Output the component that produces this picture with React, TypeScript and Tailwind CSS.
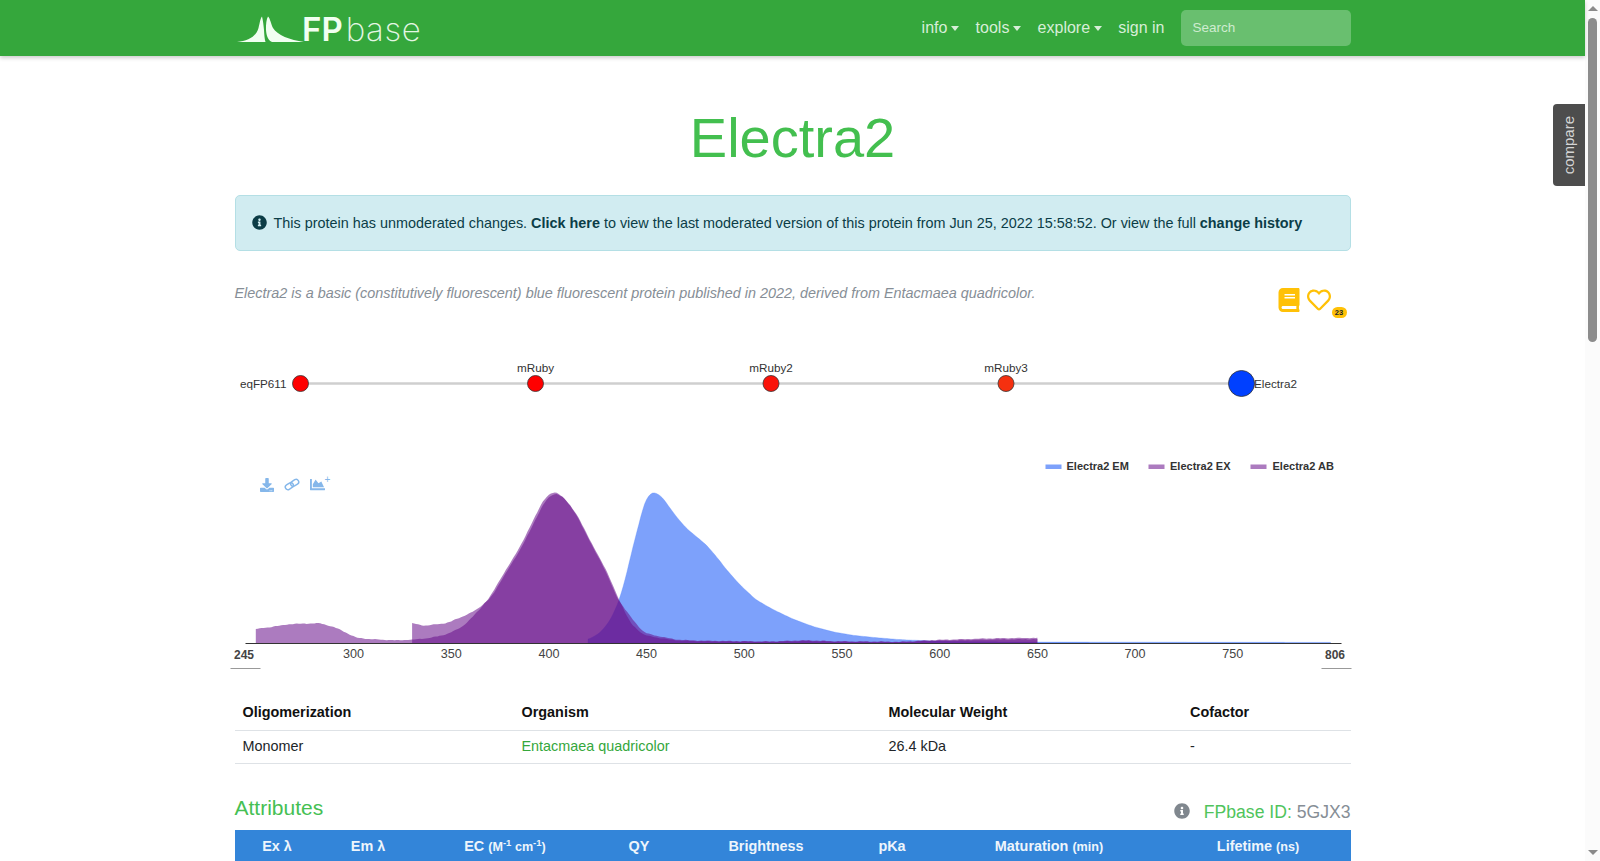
import React from 'react';
import { FaBook, FaChartArea, FaDownload, FaInfoCircle, FaRegHeart } from 'react-icons/fa';

type Pt = [number, number];

// spectra, read off the plot as [nm, relative value]
const EM: Pt[] = [[420, .022], [426, .066], [431, .143], [435.5, .264], [439, .418], [443, .637], [446.6, .813], [449, .934], [451.7, .989], [454, 1], [458, .967], [461.6, .9], [466, .824], [470.5, .758], [475.6, .703], [480.7, .648], [485.8, .571], [491, .484], [497.8, .385], [506, .286], [515, .22], [525, .158], [535, .11], [545.6, .073], [556, .05], [566, .037], [580, .022], [597, .013], [614, .009], [648, .006], [800, .004]];
const TAIL: Pt[] = [[441.6, .176], [448.5, .07], [455, .048], [465.5, .022], [477, .016], [511, .01], [532, .018], [545, .012], [580, .008], [597, .02], [631, .032], [650, .034]];
const PEAK: Pt[] = [[370, .308], [376.8, .46], [383.6, .6], [390.4, .77], [397, .945], [400.7, .99], [403.8, 1], [407.5, .967], [414.3, .846], [421, .67], [428, .505], [435, .297]];
const AB: Pt[] = [[250, .092], [257, .105], [267.6, .125], [283, .132], [291.5, .099], [296.6, .066], [301.7, .033], [313.6, .022], [322, .018], [330, .022], [339, .033], [347.8, .058], [356, .11], [363, .2], ...PEAK, ...TAIL];
const EX: Pt[] = [[330, .132], [336, .114], [347.8, .132], [356, .176], [363, .22], ...PEAK.map(([n, v]): Pt => [n + .7, v * .99]), ...TAIL.map(([n, v]): Pt => [n, v * .75])];

const xOf = (nm: number) => 353 + (nm - 300) * 1.954;
const yOf = (v: number) => 643 - v * 151;

function areaPath(pts: Pt[], jitter: number) {
  let vals: Pt[] = [];
  let i = 0;
  for (let nm = pts[0][0]; nm <= pts[pts.length - 1][0]; nm += 1) {
    while (i < pts.length - 2 && pts[i + 1][0] < nm) i++;
    const [a, va] = pts[i];
    const [b, vb] = pts[i + 1];
    vals.push([nm, va + ((nm - a) / (b - a)) * (vb - va)]);
  }
  // two passes so the read-off points don't show as corners
  for (let pass = 0; pass < 2; pass++) {
    vals = vals.map(([nm, v], k) => [nm, ((vals[k - 1]?.[1] ?? v) + v + (vals[k + 1]?.[1] ?? v)) / 3] as Pt);
  }
  const done = vals.map(([nm, v]) => [nm, Math.max(v + jitter * (Math.sin(nm * 1.7) + Math.sin(nm * 0.63)), 0)] as Pt);
  const first = done[0][0];
  const last = done[done.length - 1][0];
  return `M${xOf(first)} 643 ` + done.map(([nm, v]) => `L${xOf(nm).toFixed(1)} ${yOf(v).toFixed(1)}`).join(' ') + ` L${xOf(last)} 643 Z`;
}

const TICKS = [300, 350, 400, 450, 500, 550, 600, 650, 700, 750];
const TREE = [
  { name: 'eqFP611', x: 300, color: '#ff0000' },
  { name: 'mRuby', x: 535, color: '#ff0000' },
  { name: 'mRuby2', x: 770.5, color: '#fa1208' },
  { name: 'mRuby3', x: 1005.5, color: '#f5300f' },
];

function NavLink({ label, caret = true }: { label: string; caret?: boolean }) {
  return (
    <a className="flex items-center gap-[4px] text-[16px] text-[#d7eed8]">
      {label}
      {caret && <i className="block border-t-[5px] border-x-[4.5px] border-x-transparent border-t-[#d7eed8]" />}
    </a>
  );
}

function Logo() {
  return (
    <div className="flex items-end h-[56px] pb-[13px]">
      <svg width="67" height="27" viewBox="237 16 67 27">
        <path d="M237 42 C248 41 256 37 258.5 28 C260 22 260.5 18 262 16.5 C263 20 263.5 25 264 30 C264.3 35 264.5 39 265.5 42 Z" fill="#f1fff1" />
        <path d="M268 16.5 C270 18 271 24 273 28 C277 35 290 40 304 42 L272 42 C268 40 266.5 36 266 30 C265.8 24 266.5 19 268 16.5 Z" fill="#f1fff1" />
      </svg>
      <span className="font-['Inter'] font-semibold text-[#f1fff1] text-[33px] leading-[27px] h-[27px] ml-[-2px] mr-[3px]">FP</span>
      <span className="font-['Inter'] font-extralight text-[#e4f6e4] text-[33px] leading-[27px] tracking-[0.6px] h-[27px]">base</span>
    </div>
  );
}

export default function App() {
  const cols = [
    ['Ex λ', '', 'w-[85px]'],
    ['Em λ', '', 'w-[97px]'],
    ['EC', 'ec', 'w-[177px]'],
    ['QY', '', 'w-[91px]'],
    ['Brightness', '', 'w-[163px]'],
    ['pKa', '', 'w-[89px]'],
    ['Maturation', '(min)', 'w-[225px]'],
    ['Lifetime', '(ns)', 'flex-1 pl-[4px]'],
  ];
  return (
    <div className="flex h-screen overflow-hidden bg-white font-['Liberation_Sans',sans-serif] text-[#212529]">
      <div className="relative flex-1 min-w-0">
        {/* navbar */}
        <nav className="h-[56px] bg-[#35a73c] shadow-[0_2px_4px_rgba(0,0,0,0.2)]">
          <div className="mx-auto flex w-[1116px] items-center justify-between">
            <div className="ml-[2.5px]"><Logo /></div>
            <div className="flex items-center">
              <div className="flex items-center gap-[16.2px] mr-[16px]">
                <NavLink label="info" />
                <NavLink label="tools" />
                <NavLink label="explore" />
                <NavLink label="sign in" caret={false} />
              </div>
              <div className="flex h-[36px] w-[170px] items-center rounded-[5px] bg-[#69bf6f] px-[12px] text-[13.5px] text-[#cfeccf]">Search</div>
            </div>
          </div>
        </nav>

        {/* compare tab */}
        <div className="absolute right-0 top-[104px] flex h-[82px] w-[32px] items-center justify-center rounded-l-[4px] bg-[#4d4d4d]">
          <span className="rotate-180 text-[15px] text-[#d5d5d5] [writing-mode:vertical-rl]">compare</span>
        </div>

        <main className="mx-auto w-[1116px]">
          <h1 className="mt-[48px] h-[67px] text-center text-[56px] leading-[67px] text-[#43bf4f]">Electra2</h1>

          <div className="mt-[24px] flex h-[56px] items-center rounded-[5px] border border-[#b4dfe5] bg-[#d1ecf1] pl-[16px] text-[14.4px]">
            <FaInfoCircle className="mr-[7px] size-[15px] mb-[2px] text-[#0c3c46]" />
            <span className="mt-[1px] text-[#0b3d47]">This protein has unmoderated changes. <b>Click here</b> to view the last moderated version of this protein from Jun 25, 2022 15:58:52. Or view the full <b>change history</b></span>
          </div>

          <div className="relative mt-[33px] flex h-[40px] justify-between">
            <p className="text-[14.4px] italic text-[#868e96] leading-[18px]">Electra2 is a basic (constitutively fluorescent) blue fluorescent protein published in 2022, derived from Entacmaea quadricolor.</p>
            <div className="mr-[20px] mt-[4px] flex gap-[6px] text-[#ffc107]">
              <FaBook className="size-[24px]" />
              <FaRegHeart className="size-[24px]" />
            </div>
            <span className="absolute right-[4px] top-[23px] flex h-[11px] w-[15px] items-center justify-center rounded-full bg-[#ffc107] text-[7.5px] font-bold text-[#212529]">23</span>
          </div>

          {/* lineage */}
          <svg className="mt-[26px] block overflow-visible" width="1116" height="90" viewBox="234.5 350 1116 90">
            <line x1="300" x2="1241" y1="383.5" y2="383.5" stroke="#cfcfcf" strokeWidth="2.5" />
            {TREE.map((n) => (
              <circle key={n.name} cx={n.x} cy="383.5" r="8" fill={n.color} stroke="#333" strokeWidth="0.8" />
            ))}
            <circle cx="1241" cy="383.5" r="13" fill="#0040ff" stroke="#333" strokeWidth="0.8" />
            <g fontSize="11.7" fill="#333" fontFamily="Liberation Sans">
              <text x="286" y="388" textAnchor="end">eqFP611</text>
              <text x="535" y="372" textAnchor="middle">mRuby</text>
              <text x="770.5" y="372" textAnchor="middle">mRuby2</text>
              <text x="1005.5" y="372" textAnchor="middle">mRuby3</text>
              <text x="1253.5" y="388">Electra2</text>
            </g>
          </svg>

          {/* spectra */}
          <div className="relative mt-[10px]">
            <div className="absolute left-[25px] top-[27px] flex items-center gap-[10px] text-[#85b7ea]">
              <FaDownload className="size-[14px]" />
              <svg width="16" height="13" viewBox="0 0 15 12" fill="none" stroke="currentColor" strokeWidth="1.4">
                <rect x="1" y="5.2" width="8" height="4.8" rx="2.4" transform="rotate(-32 5 7.6)" />
                <rect x="6" y="2" width="8" height="4.8" rx="2.4" transform="rotate(-32 10 4.4)" />
              </svg>
              <span className="relative w-[22px]">
                <FaChartArea className="size-[15px]" />
                <span className="absolute left-[15px] top-[-3px] text-[10px] leading-[12px]">+</span>
              </span>
            </div>
            <svg className="block overflow-visible" width="1116" height="230" viewBox="234.5 450 1116 230">
              <path d={areaPath(EM, 0)} fill="#5182fa" fillOpacity="0.75" stroke="#5182fa" strokeOpacity="0.5" strokeWidth="0.6" />
              <path d={areaPath(AB, 0.0012)} fill="#680f8b" fillOpacity="0.55" />
              <path d={areaPath(EX, 0.0012)} fill="#680f8b" fillOpacity="0.55" />
              <line x1="245" x2="1341" y1="643.5" y2="643.5" stroke="#333" strokeWidth="1" />
              <g fontSize="12.6" fill="#444" textAnchor="middle" fontFamily="Liberation Sans">
                {TICKS.map((t) => (
                  <text key={t} x={xOf(t)} y="657.5">{t}</text>
                ))}
              </g>
              <g fontSize="12" fontWeight="bold" fill="#444" textAnchor="middle" fontFamily="Liberation Sans">
                <text x="243.5" y="658.5">245</text>
                <text x="1334.5" y="658.5">806</text>
              </g>
              <line x1="230" x2="260" y1="668.5" y2="668.5" stroke="#999" />
              <line x1="1321" x2="1351" y1="668.5" y2="668.5" stroke="#999" />
              <g fontSize="11" fontWeight="bold" fill="#333" fontFamily="Liberation Sans">
                <rect x="1045" y="464.5" width="16" height="4.5" fill="#7da1fb" />
                <text x="1066" y="469.5">Electra2 EM</text>
                <rect x="1148" y="464.5" width="16" height="4.5" fill="#ac7bbf" />
                <text x="1169.5" y="469.5">Electra2 EX</text>
                <rect x="1250" y="464.5" width="16" height="4.5" fill="#ac7bbf" />
                <text x="1272" y="469.5">Electra2 AB</text>
              </g>
            </svg>
          </div>

          {/* general info */}
          <table className="mt-[14px] w-full table-fixed text-[14.4px]">
            <thead>
              <tr className="border-b border-[#dee2e6] text-left">
                <th className="w-[279px] h-[36px] px-[8px] pt-[2px] font-bold text-[#111]">Oligomerization</th>
                <th className="w-[367px] px-[8px] pt-[2px] font-bold text-[#111]">Organism</th>
                <th className="w-[301.5px] px-[8px] pt-[2px] font-bold text-[#111]">Molecular Weight</th>
                <th className="px-[8px] pt-[2px] font-bold text-[#111]">Cofactor</th>
              </tr>
            </thead>
            <tbody>
              <tr className="border-b border-[#dee2e6]">
                <td className="h-[33px] px-[8px]">Monomer</td>
                <td className="px-[8px] text-[#35a73c]">Entacmaea quadricolor</td>
                <td className="px-[8px]">26.4 kDa</td>
                <td className="px-[8px]">-</td>
              </tr>
            </tbody>
          </table>

          <div className="mt-[29px] flex h-[37px] items-start justify-between">
            <h2 className="text-[21px] leading-[30px] text-[#45c053]">Attributes</h2>
            <div className="mt-[7px] flex items-center text-[17.6px] leading-[24px] text-[#868e96]">
              <FaInfoCircle className="mr-[14px] size-[16px] mb-[2px] text-[#80878e]" />
              <span className="text-[#50c45c]">FPbase ID:&nbsp;</span>5GJX3
            </div>
          </div>

          <div className="h-[60px] bg-[#3385d9] text-[14.4px] font-bold text-[#eef5fc]">
            <div className="flex h-[35px] items-center text-center">
              {cols.map(([name, unit, width]) => (
                <div key={name} className={width}>
                  {name}{' '}
                  {unit === 'ec' ? (
                    <span className="text-[12.6px]">(M<sup className="text-[9.5px]">-1</sup> cm<sup className="text-[9.5px]">-1</sup>)</span>
                  ) : (
                    <span className="text-[12.6px]">{unit}</span>
                  )}
                </div>
              ))}
            </div>
          </div>
        </main>
      </div>

      {/* scrollbar */}
      <aside className="flex w-[15px] flex-none flex-col items-center bg-[#fbfbfb]">
        <i className="mt-[6px] block border-b-[5px] border-x-[5px] border-x-transparent border-b-[#8a8a8a]" />
        <div className="mt-[7px] h-[324px] w-[9px] rounded-full bg-[#8c8c8c]" />
        <i className="mt-auto mb-[6px] block border-t-[5px] border-x-[5px] border-x-transparent border-t-[#8a8a8a]" />
      </aside>
    </div>
  );
}
